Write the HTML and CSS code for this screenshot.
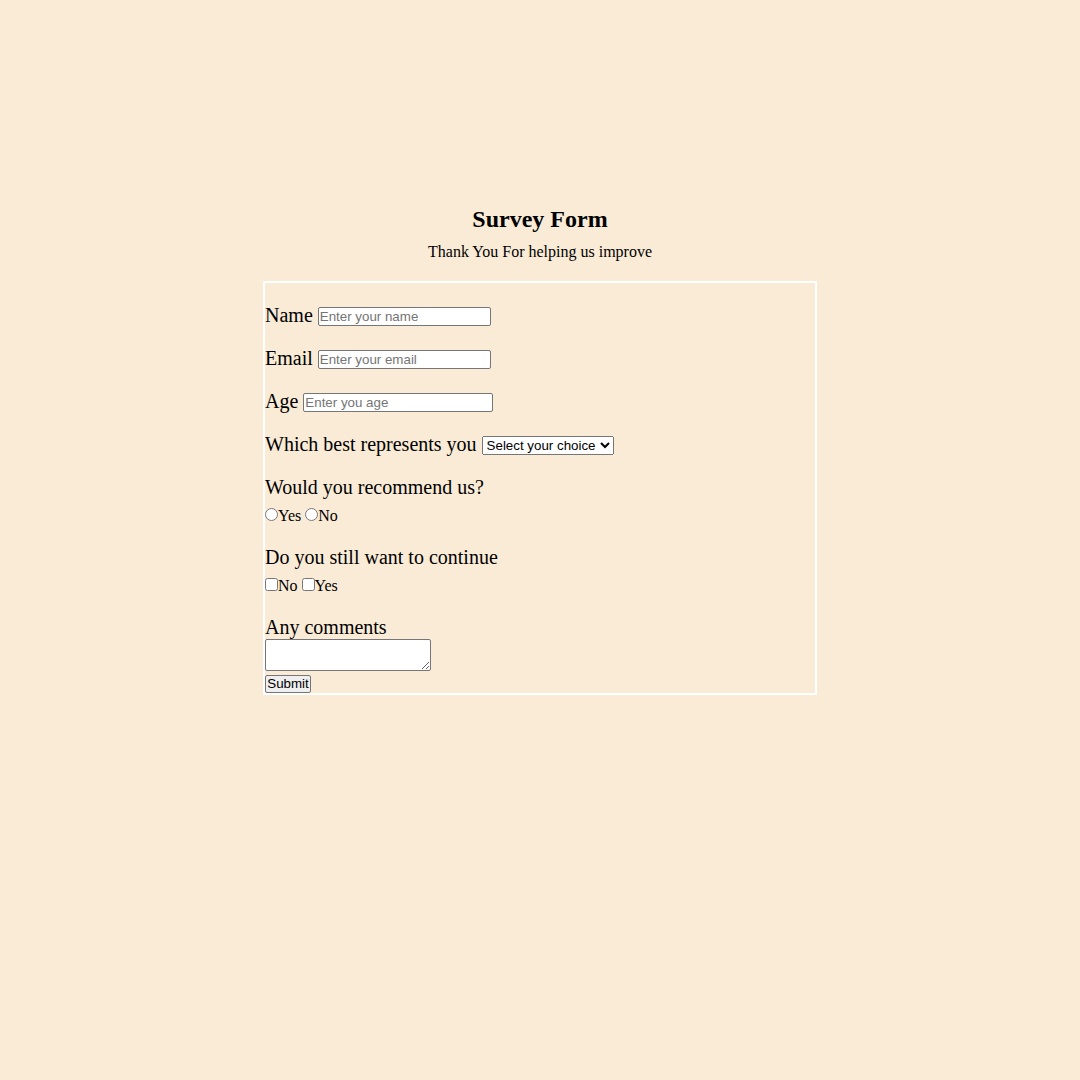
FILE: index.html
```html
<!DOCTYPE html>
<html lang="en">
<head>
<meta charset="utf-8">
<title>Survey Form</title>
<link rel="stylesheet" href="styles.css">
</head>
<body>
<header class="head">
  <h1 class="title">Survey Form</h1>
  <p class="subtitle">Thank You For helping us improve</p>
</header>
<form class="survey">
  <div class="field"><label class="lbl" for="name">Name</label> <input class="txt" id="name" type="text" placeholder="Enter your name"></div>
  <div class="field"><label class="lbl" for="email">Email</label> <input class="txt" id="email" type="email" placeholder="Enter your email"></div>
  <div class="field"><label class="lbl" for="age">Age</label> <input class="txt age" id="age" type="text" placeholder="Enter you age"></div>
  <div class="field"><label class="lbl" for="role">Which best represents you</label> <select class="sel" id="role"><option>Select your choice</option><option>Student</option><option>Professional</option></select></div>
  <div class="field"><div class="q">Would you recommend us?</div>
    <div class="opts"><input class="mark" type="radio" name="rec" id="ry"><label for="ry">Yes</label> <input class="mark" type="radio" name="rec" id="rn"><label for="rn">No</label></div></div>
  <div class="field"><div class="q">Do you still want to continue</div>
    <div class="opts"><input class="mark" type="checkbox" id="cn"><label for="cn">No</label> <input class="mark" type="checkbox" id="cy"><label for="cy">Yes</label></div></div>
  <div class="last"><div class="q">Any comments</div>
    <textarea class="comments"></textarea><button class="submit" type="submit">Submit</button></div>
</form>
</body>
</html>
```

FILE: styles.css
```css
html, body {
  background: #faebd7;
}
body {
  margin: 0;
  font-family: "Liberation Serif", "Times New Roman", serif;
  color: #000;
}
.head {
  text-align: center;
}
.title {
  font-size: 24px;
  line-height: 28px;
  font-weight: bold;
  margin: 205px 0 10px;
}
.subtitle {
  font-size: 16px;
  line-height: 18px;
  margin: 0 0 20px;
}
.survey {
  width: 550px;
  margin: 0 auto;
  padding-top: 1px;
  border: 2px solid #fff;
}
.field {
  font-size: 20px;
  line-height: 23px;
  margin: 20px 0;
}
.last {
  font-size: 20px;
  line-height: 23px;
  margin-top: 20px;
}
.q {
  font-size: 20px;
  line-height: 23px;
}
.opts {
  font-size: 16px;
  line-height: 20px;
  margin-top: 7px;
}
.mark {
  margin: 0;
  width: 13px;
  height: 13px;
}
.txt {
  box-sizing: border-box;
  width: 173px;
  height: 19px;
  padding: 0 1px;
  border: 1px solid #767676;
  border-radius: 2px;
  background: #fff;
  font-family: "Liberation Sans", Arial, sans-serif;
  font-size: 13.33px;
  line-height: 15px;
  vertical-align: 1px;
}
.txt.age {
  width: 190px;
}
.sel {
  box-sizing: border-box;
  width: 132px;
  height: 19px;
  font-family: "Liberation Sans", Arial, sans-serif;
  font-size: 13.33px;
  vertical-align: 1px;
}
.comments {
  display: block;
  box-sizing: border-box;
  width: 166px;
  height: 32px;
  margin: 0;
  border: 1px solid #767676;
  border-radius: 2px;
}
.submit {
  display: block;
  box-sizing: border-box;
  width: 46px;
  height: 18px;
  margin: 4px 0 0;
  padding: 0 1px;
  border: 1px solid #767676;
  border-radius: 2px;
  background: #efefef;
  color: #000;
  font-family: "Liberation Sans", Arial, sans-serif;
  font-size: 13.33px;
  line-height: 14px;
}
```
